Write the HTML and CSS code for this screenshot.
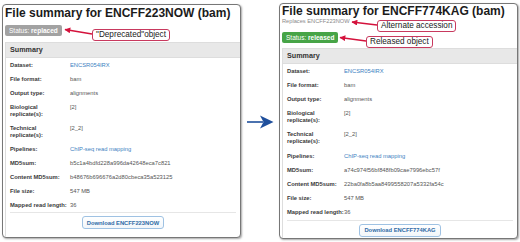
FILE: index.html
```html
<!DOCTYPE html>
<html lang="en">
<head>
<meta charset="utf-8">
<title>File summary comparison</title>
<link rel="stylesheet" href="styles.css">
</head>
<body>
<div class="figure">
  <section class="shot shot--old">
    <h1 class="title">File summary for ENCFF223NOW (bam)</h1>
    <div class="status status--replaced">Status: <b>replaced</b></div>
    <div class="summary">
      <div class="summary__head">Summary</div>
      <dl class="props">
        <div class="prop"><dt>Dataset:</dt><dd><a class="link">ENCSR054IRX</a></dd></div>
        <div class="prop"><dt>File format:</dt><dd>bam</dd></div>
        <div class="prop"><dt>Output type:</dt><dd>alignments</dd></div>
        <div class="prop"><dt>Biological replicate(s):</dt><dd>[2]</dd></div>
        <div class="prop"><dt>Technical replicate(s):</dt><dd>[2_2]</dd></div>
        <div class="prop"><dt>Pipelines:</dt><dd><a class="link">ChIP-seq read mapping</a></dd></div>
        <div class="prop"><dt>MD5sum:</dt><dd>b5c1a4bdfd228a996da42648eca7c821</dd></div>
        <div class="prop"><dt>Content MD5sum:</dt><dd>b48676b696676a2d80cbeca35a523125</dd></div>
        <div class="prop"><dt>File size:</dt><dd>547 MB</dd></div>
        <div class="prop"><dt>Mapped read length:</dt><dd>36</dd></div>
      </dl>
      <div class="actions"><button class="btn">Download ENCFF223NOW</button></div>
    </div>
  </section>

  <section class="shot shot--new">
    <h1 class="title">File summary for ENCFF774KAG (bam)</h1>
    <div class="replaces">Replaces ENCFF223NOW</div>
    <div class="status status--released">Status: <b>released</b></div>
    <div class="summary">
      <div class="summary__head">Summary</div>
      <dl class="props">
        <div class="prop"><dt>Dataset:</dt><dd><a class="link">ENCSR054IRX</a></dd></div>
        <div class="prop"><dt>File format:</dt><dd>bam</dd></div>
        <div class="prop"><dt>Output type:</dt><dd>alignments</dd></div>
        <div class="prop"><dt>Biological replicate(s):</dt><dd>[2]</dd></div>
        <div class="prop"><dt>Technical replicate(s):</dt><dd>[2_2]</dd></div>
        <div class="prop"><dt>Pipelines:</dt><dd><a class="link">ChIP-seq read mapping</a></dd></div>
        <div class="prop"><dt>MD5sum:</dt><dd>a74c974f56bf848fb09cae7996ebc57f</dd></div>
        <div class="prop"><dt>Content MD5sum:</dt><dd>22ba0fa8b5aa8499558207a5332fa54c</dd></div>
        <div class="prop"><dt>File size:</dt><dd>547 MB</dd></div>
        <div class="prop"><dt>Mapped read length:</dt><dd>36</dd></div>
      </dl>
      <div class="actions"><button class="btn">Download ENCFF774KAG</button></div>
    </div>
  </section>

  <svg class="arrows" viewBox="0 0 520 242" width="520" height="242" aria-hidden="true">
    <defs>
      <marker id="redhead" viewBox="0 0 10 10" refX="9" refY="5" markerWidth="5" markerHeight="4.5" orient="auto">
        <path d="M0 0 L10 5 L0 10 z" fill="#d4123c"/>
      </marker>
    </defs>
    <line x1="92" y1="34" x2="65" y2="29.5" stroke="#d4123c" stroke-width="1.3" marker-end="url(#redhead)"/>
    <line x1="377" y1="25" x2="352" y2="22" stroke="#d4123c" stroke-width="1.3" marker-end="url(#redhead)"/>
    <line x1="366" y1="41" x2="340" y2="37.5" stroke="#d4123c" stroke-width="1.3" marker-end="url(#redhead)"/>
    <path d="M247 121.2 H263 V122.8 H247 Z" fill="#1f4f9c"/>
    <path d="M273.5 122 L260 115.5 L263.5 122 L260 128.5 Z" fill="#1f4f9c"/>
  </svg>
  <span class="callout callout--deprecated">"Deprecated"object</span>
  <span class="callout callout--alternate">Alternate accession</span>
  <span class="callout callout--released">Released object</span>
</div>
</body>
</html>
```

FILE: styles.css
```css
* { box-sizing: border-box; }
html, body { margin: 0; padding: 0; background: #fff; }
body {
  font-family: "Liberation Sans", Arial, sans-serif;
  width: 520px;
  height: 242px;
  overflow: hidden;
}
.figure {
  position: relative;
  width: 520px;
  height: 242px;
  display: flex;
  align-items: flex-start;
  padding: 3px 0 0 2px;
  gap: 38px;
}
.shot {
  width: 239px;
  border: 1px solid #777;
  border-radius: 4px;
  box-shadow: 1px 1px 2px rgba(0, 0, 0, .35);
  background: #fff;
  overflow: hidden;
  display: flex;
  flex-direction: column;
  padding-left: 2px;
}
.shot--old { margin-top: 1px; height: 234px; padding-top: 1px; }
.shot--new { height: 236px; }
.title {
  margin: 0;
  font-size: 12px;
  line-height: 14px;
  font-weight: bold;
  color: #1b1b1b;
  white-space: nowrap;
}
.replaces {
  font-size: 5.7px;
  line-height: 7px;
  color: #8a8a8a;
  margin-bottom: 2px;
}
.status {
  align-self: flex-start;
  margin-top: 5px;
  padding: 1px 4px;
  font-size: 6.5px;
  line-height: 9px;
  color: #fff;
  border-radius: 2px;
}
.status--replaced { background: #a2a2a2; }
.status--released { background: #47a447; }
.summary {
  flex: 1;
  display: flex;
  flex-direction: column;
  border: 1px solid #ddd;
  border-right: 0;
  border-bottom: 0;
  margin-top: 6px;
}
.shot--new .summary { margin-top: 5px; }
.summary__head {
  height: 15px;
  line-height: 14px;
  background: #e8e8e8;
  border-bottom: 1px solid #ddd;
  padding-left: 4px;
  font-weight: bold;
  font-size: 7.2px;
  color: #333;
}
.props {
  margin: 0;
  padding: 0 4px;
  display: flex;
  flex-direction: column;
}
.prop {
  display: grid;
  grid-template-columns: 60px 1fr;
  padding: 3.5px 0;
  line-height: 7px;
  font-size: 5.8px;
}
.shot--new .prop { grid-template-columns: 57px 1fr; padding: 3.6px 0; }
.prop dt { font-weight: bold; color: #3a3a3a; }
.prop dd { margin: 0; color: #555; }
.link { color: #3d7fc1; text-decoration: none; }
.actions {
  border-top: 1px solid #e6e6e6;
  margin: 0 4px;
  padding-top: 3px;
  display: flex;
  justify-content: center;
}
.btn {
  font: bold 5.8px "Liberation Sans", Arial, sans-serif;
  height: 13px;
  padding: 0 4px;
  color: #2f6aa5;
  background: linear-gradient(#fff, #f2f6fa);
  border: 1px solid #9fc2e3;
  border-radius: 3px;
}
.arrows {
  position: absolute;
  left: 0;
  top: 0;
  pointer-events: none;
}
.callout {
  position: absolute;
  font-size: 8.2px;
  line-height: 10px;
  padding: 0 3px;
  border: 1px solid #c8395e;
  border-radius: 3px;
  background: #fff;
  color: #222;
  white-space: nowrap;
}
.callout--deprecated { left: 92px; top: 29px; }
.callout--alternate { left: 377px; top: 20px; }
.callout--released { left: 366px; top: 36px; }
```
